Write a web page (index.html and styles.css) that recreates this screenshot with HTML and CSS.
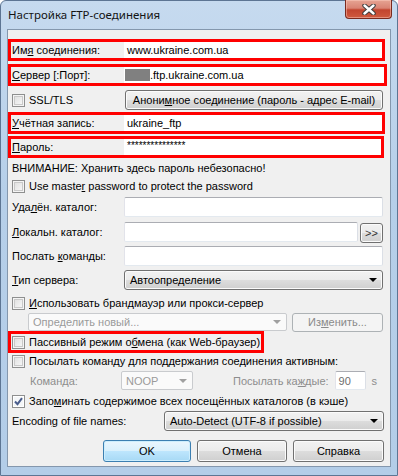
FILE: index.html
```html
<!DOCTYPE html>
<html lang="ru">
<head>
    <meta charset="UTF-8">
    <meta name="viewport" content="width=device-width, initial-scale=1.0">
    <title>Настройка FTP-соединения</title>
    <link rel="stylesheet" href="styles.css">
</head>
<body>
<div class="window">
    <!-- Title bar -->
    <div class="titlebar">
        <span class="title">Настройка FTP-соединения</span>
        <div class="close-btn">
            <svg width="14" height="11" viewBox="0 0 14 11">
                <path d="M2.5 1.5 L11.5 9.5 M11.5 1.5 L2.5 9.5" stroke="#3b3b3b" stroke-width="4.4" stroke-linecap="round"/>
                <path d="M2.5 1.5 L11.5 9.5 M11.5 1.5 L2.5 9.5" stroke="#ffffff" stroke-width="2.4" stroke-linecap="round"/>
            </svg>
        </div>
    </div>

    <div class="client">
        <!-- Connection -->
        <div class="mark r1">
            <span class="lbl"><span>Им<u>я</u> соединения:</span></span>
            <span class="val">www.ukraine.com.ua</span>
        </div>
        <div class="mark r2">
            <span class="lbl"><span><u>С</u>ервер [:Порт]:</span></span>
            <span class="val val-tight"><span class="blur"></span>.ftp.ukraine.com.ua</span>
        </div>
        <div class="line h20 r3">
            <span class="check"><span class="box"></span><span>SSL/TLS</span></span>
            <button class="btn anon"><span>Анони<u>м</u>ное соединение (пароль - адрес E-mail)</span></button>
        </div>
        <div class="mark r4">
            <span class="lbl"><span><u>У</u>чётная запись:</span></span>
            <span class="val">ukraine_ftp</span>
        </div>
        <div class="mark r5">
            <span class="lbl"><span><u>П</u>ароль:</span></span>
            <span class="val pass">***************</span>
        </div>

        <div class="line h16 warn">ВНИМАНИЕ: Хранить здесь пароль небезопасно!</div>
        <div class="line h16 m2">
            <span class="check"><span class="box"></span><span>Use maste<u>r</u> password to protect the password</span></span>
        </div>

        <!-- Folders -->
        <div class="line h20 m3">
            <span class="flabel">Уда<u>л</u>ён. каталог:</span>
            <span class="input grow"></span>
        </div>
        <div class="line h20 m5">
            <span class="flabel"><u>Л</u>окальн. каталог:</span>
            <span class="input grow"></span>
            <button class="btn browse">&gt;&gt;</button>
        </div>
        <div class="line h20 m4">
            <span class="flabel">Послать <u>к</u>оманды:</span>
            <span class="input grow"></span>
        </div>
        <div class="line h20 m4">
            <span class="flabel"><u>Т</u>ип сервера:</span>
            <span class="combo btn grow"><span>Автоопределение</span><span class="arrow"></span></span>
        </div>

        <!-- Proxy -->
        <div class="line h16 m5">
            <span class="check"><span class="box"></span><span><u>И</u>спользовать брандмауэр или прокси-сервер</span></span>
        </div>
        <div class="line proxy">
            <span class="combo off proxy-combo"><span>Определить новый...</span><span class="arrow"></span></span>
            <button class="btn off edit"><span>Из<u>м</u>енить...</span></button>
        </div>
        <div class="mark passive">
            <span class="check"><span class="box"></span><span>Пассивный режим о<u>б</u>мена (как Web-браузер)</span></span>
        </div>
        <div class="line h16">
            <span class="check"><span class="box"></span><span>Посылать команду для поддержания соединения активным:</span></span>
        </div>
        <div class="line keep">
            <span class="klabel dim">Коман<u>д</u>а:</span>
            <span class="combo off noop"><span>NOOP</span><span class="arrow"></span></span>
            <span class="dim every">Посылать ка<u>ж</u>дые:</span>
            <span class="input secs">90</span>
            <span class="dim">s</span>
        </div>
        <div class="line h16 m3">
            <span class="check"><span class="box on">
                <svg width="11" height="11" viewBox="0 0 11 11"><path d="M2 5.5 L4.5 8.2 L9 2.2" stroke="#4a5d8c" stroke-width="2" fill="none"/></svg>
            </span><span>Запо<u>м</u>инать содержимое всех посещённых каталогов (в кэше)</span></span>
        </div>
        <div class="line enc">
            <span class="elabel">Encodin<u>g</u> of file names:</span>
            <span class="combo btn grow"><span>Auto-Detect (UTF-8 if possible)</span><span class="arrow"></span></span>
        </div>

        <!-- Dialog buttons -->
        <div class="buttons">
            <button class="btn ok">OK</button>
            <button class="btn cancel">Отмена</button>
            <button class="btn help">Справка</button>
        </div>
    </div>
</div>
</body>
</html>
```

FILE: styles.css
```css
/* Page */
body {
    margin: 0;
    font-family: "Liberation Sans", Arial, sans-serif;
    font-size: 11px;
    color: #000;
}
u {
    text-decoration: underline;
    text-underline-offset: 1px;
}
/* Aero frame */
.window {
    width: 398px;
    height: 476px;
    box-sizing: border-box;
    border: 1px solid #5d7593;
    border-radius: 6px 6px 0 0;
    background: linear-gradient(to bottom, #c6daef 0%, #b6cfe9 40%, #b3cde8 100%);
    padding: 0 6px 8px 6px;
    display: flex;
    flex-direction: column;
}
.titlebar {
    height: 28px;
    display: flex;
    justify-content: space-between;
    align-items: flex-start;
}
.title {
    padding: 6px 0 0 1px;
    font-family: "Noto Sans", "Liberation Sans", sans-serif;
    font-size: 11.5px;
    color: #141414;
}
.close-btn {
    width: 47px;
    height: 19px;
    margin: -1px -1px 0 0;
    box-sizing: border-box;
    border: 1px solid #7a2a1e;
    border-top: none;
    border-radius: 0 0 4px 4px;
    background: linear-gradient(to bottom, #e6a493 0%, #d98373 45%, #c2452f 55%, #cf5a3f 100%);
    box-shadow: inset 0 0 0 1px rgba(255, 210, 200, 0.45);
    display: flex;
    align-items: center;
    justify-content: center;
}
/* Client area */
.client {
    flex: 1;
    box-sizing: border-box;
    border: 1px solid #8497ad;
    background: #f0f0f0;
    display: flex;
    flex-direction: column;
    white-space: nowrap;
}
/* Red highlight frames */
.mark {
    box-sizing: border-box;
    height: 22px;
    border: 3px solid #ff0000;
    display: flex;
    align-items: stretch;
}
.mark .lbl {
    width: 112px;
    padding-left: 1px;
    display: flex;
    align-items: center;
}
.mark .val {
    flex: 1;
    background: #fff;
    display: flex;
    align-items: center;
    padding-left: 3px;
}
.mark .val-tight { padding-left: 1px; }
.mark .pass { align-items: flex-start; padding-top: 1px; font-size: 10px; }
.blur {
    display: inline-block;
    width: 25px;
    height: 12px;
    background: #808080;
}
.r1 { margin-top: 9px; width: 377px; }
.r2 { margin-top: 3px; width: 379px; }
.r4 { margin-top: 2px; width: 377px; }
.r5 { margin-top: 2px; width: 376px; }
.passive {
    width: 256px;
    padding-left: 1px;
    align-items: center;
}
/* Plain rows */
.line {
    display: flex;
    align-items: center;
    padding: 0 7px 0 4px;
    box-sizing: border-box;
}
.h16 { height: 16px; }
.h20 { height: 20px; }
.m2 { margin-top: 2px; }
.m3 { margin-top: 3px; }
.m4 { margin-top: 4px; }
.m5 { margin-top: 5px; }
.r3 { margin-top: 4px; }
.warn { margin-top: 2px; }
.flabel { width: 112px; flex: none; }
.grow { flex: 1; align-self: stretch; }
/* Checkbox */
.check {
    display: flex;
    align-items: center;
    gap: 4px;
    white-space: nowrap;
}
.box {
    width: 13px;
    height: 13px;
    box-sizing: border-box;
    border: 1px solid #8e8f8f;
    background: linear-gradient(135deg, #dcdcdc, #fbfbfb);
    box-shadow: inset 0 0 0 1px #f4f4f4, inset 0 0 0 2px #c9c9c9;
    display: flex;
    align-items: center;
    justify-content: center;
    flex: none;
}
.box.on { background: #f4f6f8; box-shadow: inset 0 0 0 1px #fff; }
/* Edit boxes */
.input {
    box-sizing: border-box;
    background: #fff;
    border: 1px solid #abadb3;
    border-color: #abadb3 #dbdfe6 #e3e9ef #e2e3ea;
    border-radius: 2px;
    display: flex;
    align-items: center;
    padding-left: 4px;
}
/* Buttons */
.btn {
    font: inherit;
    color: #000;
    box-sizing: border-box;
    border: 1px solid #707070;
    border-radius: 3px;
    background: linear-gradient(to bottom, #f2f2f2 0%, #ebebeb 50%, #dddddd 50%, #cfcfcf 100%);
    box-shadow: inset 0 0 0 1px #fbfbfb;
    padding: 0;
    display: flex;
    align-items: center;
    justify-content: center;
    white-space: nowrap;
}
.anon { margin-left: auto; width: 258px; height: 20px; }
.browse { width: 23px; height: 20px; margin-left: 2px; margin-top: 2px; color: #333; }
.btn.off {
    background: #f4f4f4;
    border-color: #adb2b5;
    box-shadow: none;
    color: #8a8a8a;
}
/* Combo boxes */
.combo {
    justify-content: space-between;
    padding: 0 5px 0 4px;
}
.combo.btn { padding-left: 5px; }
.arrow {
    width: 0;
    height: 0;
    border-left: 4px solid transparent;
    border-right: 4px solid transparent;
    border-top: 4px solid #000;
}
.combo.off {
    box-sizing: border-box;
    display: flex;
    align-items: center;
    background: #fafafa;
    border: 1px solid #c9cbce;
    border-radius: 2px;
    color: #9a9a9a;
}
.combo.off .arrow { border-top-color: #a0a0a0; }
.proxy {
    height: 18px;
    margin-top: 2px;
    padding-left: 20px;
}
.proxy-combo { width: 259px; height: 18px; }
.edit { width: 91px; height: 19px; margin-left: 5px; }
/* Keep-alive row */
.keep { height: 19px; margin-top: 2px; padding-left: 22px; }
.dim { color: #8d8d8d; }
.klabel { width: 91px; flex: none; }
.noop { width: 72px; height: 19px; }
.every { margin-left: 40px; }
.secs { width: 31px; height: 19px; margin: 0 6px; color: #6d6d6d; padding-left: 3px; }
/* Encoding */
.enc { height: 20px; margin-top: 2px; padding-right: 6px; }
.elabel { width: 152px; flex: none; }
/* Dialog buttons */
.buttons {
    margin-top: 9px;
    display: flex;
    justify-content: flex-end;
    gap: 6px;
    padding-right: 6px;
}
.buttons .btn { height: 22px; }
.ok {
    width: 88px;
    border-color: #3c7fb1;
    background: linear-gradient(to bottom, #eaf6fd 0%, #d9f0fc 50%, #bee6fd 50%, #a7d9f5 100%);
    box-shadow: inset 0 0 0 1px #cdeefd;
}
.cancel { width: 90px; }
.help { width: 91px; }
```
